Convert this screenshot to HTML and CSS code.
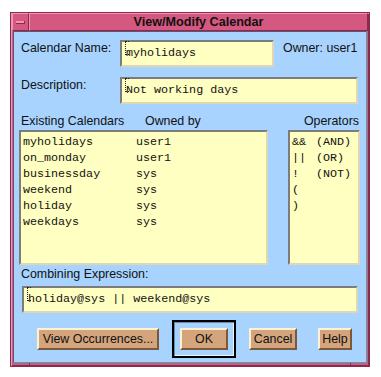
FILE: index.html
```html
<!DOCTYPE html>
<html lang="en">
<head>
  <meta charset="UTF-8" />
  <title>View/Modify Calendar</title>
  <link rel="stylesheet" href="styles.css">
</head>
<body>
  <div class="window">
    <!-- title bar -->
    <div class="titlebar">
      <div class="menu-btn"><span class="dash"></span></div>
      <div class="title">View/Modify Calendar</div>
    </div>

    <div class="content">
      <div class="row name-row">
        <div class="label name-label">Calendar Name:</div>
        <div class="field name-field"><span class="cursor"></span>myholidays</div>
        <div class="label owner">Owner: user1</div>
      </div>

      <div class="row desc-row">
        <div class="label name-label">Description:</div>
        <div class="field desc-field"><span class="cursor"></span>Not working days</div>
      </div>

      <div class="row heads">
        <div class="label head-cal">Existing Calendars</div>
        <div class="label head-own">Owned by</div>
        <div class="label head-ops">Operators</div>
      </div>

      <div class="row lists">
        <div class="listbox calendars">
          <span>myholidays</span><span>user1</span>
          <span>on_monday</span><span>user1</span>
          <span>businessday</span><span>sys</span>
          <span>weekend</span><span>sys</span>
          <span>holiday</span><span>sys</span>
          <span>weekdays</span><span>sys</span>
        </div>
        <div class="listbox operators">
          <span>&amp;&amp;</span><span>(AND)</span>
          <span>||</span><span>(OR)</span>
          <span>!</span><span>(NOT)</span>
          <span>(</span><span></span>
          <span>)</span><span></span>
        </div>
      </div>

      <div class="label expr-label">Combining Expression:</div>
      <div class="field expr-field"><span class="cursor"></span>holiday@sys || weekend@sys</div>

      <div class="buttons">
        <button class="btn btn-view" type="button">View Occurrences...</button>
        <div class="default-frame">
          <button class="btn btn-ok" type="button">OK</button>
        </div>
        <button class="btn btn-cancel" type="button">Cancel</button>
        <button class="btn btn-help" type="button">Help</button>
      </div>
    </div>

    <!-- resize corner marks -->
    <span class="mark mark-tl"></span>
    <span class="mark mark-tr"></span>
    <span class="mark mark-bl"></span>
    <span class="mark mark-br"></span>
  </div>
</body>
</html>
```

FILE: styles.css
```css
:root {
  --pink: #d55880;
  --pink-light: #ee94b4;
  --pink-dark: #8a2a4e;
  --blue: #a8d3fe;
  --field: #ffffc2;
  --tan: #d4a57d;
  --tan-light: #fbf1d4;
  --tan-dark: #7a5838;
  --ink: #111;
}
* {
  box-sizing: border-box;
}
body {
  margin: 0;
  background: #fff;
  font-family: "Liberation Sans", Arial, Helvetica, sans-serif;
  font-size: 12.4px;
  color: var(--ink);
}
.window {
  position: relative;
  margin: 12px 0 0 10px;
  width: 360px;
  height: 355px;
  background: var(--pink);
  border: 1px solid var(--pink-dark);
  box-shadow: inset 1px 1px 0 var(--pink-light), inset -1px -1px 0 var(--pink-dark);
  padding: 0 1px 3px;
  display: flex;
  flex-direction: column;
}
/* ---------- TITLE BAR ---------- */
.titlebar {
  display: flex;
  height: 18px;
}
.menu-btn {
  width: 17px;
  height: 18px;
  border: 1px solid;
  border-color: var(--pink-light) var(--pink-dark) var(--pink-dark) var(--pink-light);
  display: flex;
  align-items: center;
  justify-content: center;
}
.dash {
  display: block;
  width: 9px;
  height: 3px;
  background: var(--pink-light);
  border-bottom: 1px solid var(--pink-dark);
  border-right: 1px solid var(--pink-dark);
}
.title {
  flex: 1;
  height: 18px;
  border: 1px solid;
  border-color: var(--pink-light) var(--pink-dark) var(--pink-dark) var(--pink-light);
  text-align: center;
  font-weight: bold;
  font-size: 12.6px;
  line-height: 16px;
}
/* ---------- CONTENT ---------- */
.content {
  flex: 1;
  margin: 0 1px;
  background: var(--blue);
  border: 1px solid;
  border-color: #6a5070 #4aa3a6 #4aa3a6 #6a5070;
  display: flex;
  flex-direction: column;
}
.row {
  display: flex;
  align-items: flex-start;
}
.label {
  line-height: 16px;
  white-space: nowrap;
}
.field {
  position: relative;
  height: 27px;
  background: var(--field);
  border: 2px solid;
  border-color: #7c7c7c #dcd8b4 #dcd8b4 #7c7c7c;
  font-family: "Liberation Mono", "Courier New", monospace;
  font-size: 11.7px;
  line-height: 23px;
  padding-left: 4px;
  white-space: pre;
}
.cursor {
  position: relative;
}
.cursor::before {
  content: "";
  position: absolute;
  left: -1px;
  top: -5px;
  width: 3px;
  height: 12px;
  border-left: 1px dotted #222;
  border-top: 1px dotted #222;
  border-bottom: 1px dotted #222;
  border-right: 0;
}
.name-row {
  margin-top: 8px;
  padding-left: 7px;
}
.name-label {
  width: 99px;
}
.name-field {
  width: 154px;
}
.owner {
  margin-left: 9px;
}
.desc-row {
  margin-top: 10px;
  padding-left: 7px;
}
.desc-field {
  width: 238px;
}
.heads {
  margin-top: 9px;
  padding-left: 7px;
}
.head-cal {
  width: 124px;
}
.head-ops {
  margin-left: auto;
  margin-right: 7px;
}
/* ---------- LISTS ---------- */
.lists {
  margin-top: 1px;
  padding-left: 5px;
  gap: 20px;
}
.listbox {
  height: 135px;
  background: var(--field);
  border: 2px solid;
  border-color: #7c7c7c #dcd8b4 #dcd8b4 #7c7c7c;
  font-family: "Liberation Mono", "Courier New", monospace;
  font-size: 11.7px;
  line-height: 16px;
  padding: 2px 2px;
  display: grid;
  align-content: start;
  white-space: pre;
}
.calendars {
  width: 249px;
  grid-template-columns: 113px auto;
}
.operators {
  width: 72px;
  grid-template-columns: 24px auto;
}
.expr-label {
  margin: 1px 0 0 7px;
}
.expr-field {
  width: 336px;
  margin: 4px 0 0 8px;
}
/* ---------- BUTTONS ---------- */
.buttons {
  display: flex;
  align-items: center;
  margin-top: 7px;
  padding-left: 23px;
}
.btn {
  height: 22px;
  margin: 0;
  padding: 0 2px;
  background: var(--tan);
  border: 2px solid;
  border-color: var(--tan-light) var(--tan-dark) var(--tan-dark) var(--tan-light);
  font-family: "Liberation Sans", Arial, Helvetica, sans-serif;
  font-size: 12.4px;
  color: var(--ink);
  line-height: 16px;
  white-space: nowrap;
}
.btn-view {
  width: 122px;
}
.default-frame {
  width: 64px;
  height: 38px;
  margin-left: 13px;
  border: 2px solid #000;
  box-shadow: inset 1px 1px 0 #5e8cae, inset -1px -1px 0 #eaf5ff;
  display: flex;
  align-items: center;
  justify-content: center;
}
.btn-ok {
  width: 48px;
}
.btn-cancel {
  margin-left: 13px;
  width: 48px;
}
.btn-help {
  margin-left: 21px;
  width: 34px;
}
/* ---------- FRAME MARKS ---------- */
.mark {
  position: absolute;
  width: 1px;
  background: var(--pink-dark);
}
.mark-tl {
  left: 18px;
  top: -1px;
  height: 1px;
}
.mark-tr {
  right: 18px;
  top: -1px;
  height: 1px;
}
.mark-bl {
  left: 18px;
  bottom: -1px;
  height: 4px;
}
.mark-br {
  right: 18px;
  bottom: -1px;
  height: 4px;
}
```
